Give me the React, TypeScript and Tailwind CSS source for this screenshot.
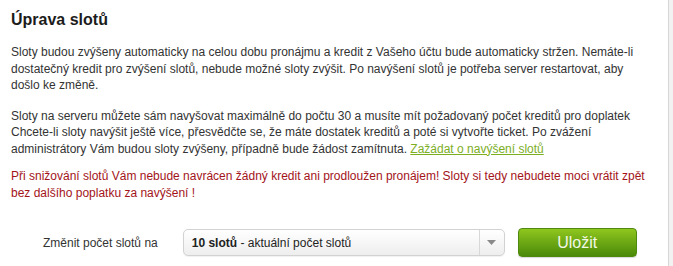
import React from "react";

export default function App() {
  return (
    <div className="w-[673px] h-[266px] bg-[#f2f2f2] overflow-hidden" style={{ fontFamily: '"Liberation Sans", Arial, sans-serif' }}>
      <div className="w-[669px] h-[266px] bg-white border-r border-[#d6d6d6] pl-[11px] pt-[10px]">
        <h1 className="text-[16px] leading-[20px] font-bold text-[#1c1c1c]">Úprava slotů</h1>
        <p className="mt-[14px] text-[12px] leading-[16.5px] text-[#333333] whitespace-nowrap">
          Sloty budou zvýšeny automaticky na celou dobu pronájmu a kredit z Vašeho účtu bude automaticky stržen. Nemáte-li
          <br />
          dostatečný kredit pro zvýšení slotů, nebude možné sloty zvýšit. Po navýšení slotů je potřeba server restartovat, aby
          <br />
          došlo ke změně.
        </p>
        <p className="mt-[14px] text-[12px] leading-[16.5px] text-[#333333] whitespace-nowrap">
          Sloty na serveru můžete sám navyšovat maximálně do počtu 30 a musíte mít požadovaný počet kreditů pro doplatek
          <br />
          Chcete-li sloty navýšit ještě více, přesvědčte se, že máte dostatek kreditů a poté si vytvořte ticket. Po zvážení
          <br />
          administrátory Vám budou sloty zvýšeny, případně bude žádost zamítnuta.{" "}
          <a href="#" className="text-[#7cae1f] underline">Zažádat o navýšení slotů</a>
        </p>
        <p className="mt-[11px] text-[12px] leading-[16.5px] text-[#a3141a] whitespace-nowrap">
          Při snižování slotů Vám nebude navrácen žádný kredit ani prodloužen pronájem! Sloty si tedy nebudete moci vrátit zpět
          <br />
          bez dalšího poplatku za navýšení !
        </p>
        <div className="mt-[27px] flex items-center h-[29px]">
          <span className="ml-[32px] text-[12px] text-[#333333]">Změnit počet slotů na</span>
          <div className="ml-[25px] w-[322px] h-[27px] flex border border-[#d2d2d2] rounded-[5px] bg-gradient-to-b from-white to-[#eeeeee] shadow-[0_1px_1px_rgba(0,0,0,0.06)]">
            <div className="flex-1 flex items-center pl-[8px] text-[12px] text-[#222222]">
              <span className="font-bold">10 slotů</span>
              <span>&nbsp;- aktuální počet slotů</span>
            </div>
            <div className="w-[25px] border-l border-[#d8d8d8] flex items-center justify-center">
              <svg width="9" height="5" viewBox="0 0 9 5">
                <path d="M0 0 H9 L4.5 5 Z" fill="#8a8a8a" />
              </svg>
            </div>
          </div>
          <button className="ml-[13px] w-[119px] h-[29px] rounded-[4px] bg-gradient-to-b from-[#8fc61e] to-[#4a8a09] border border-[#4f8a10] text-[16px] text-[#f2f8e6] flex items-center justify-center shadow-[0_1px_1px_rgba(0,0,0,0.15)]">
            Uložit
          </button>
        </div>
      </div>
    </div>
  );
}
